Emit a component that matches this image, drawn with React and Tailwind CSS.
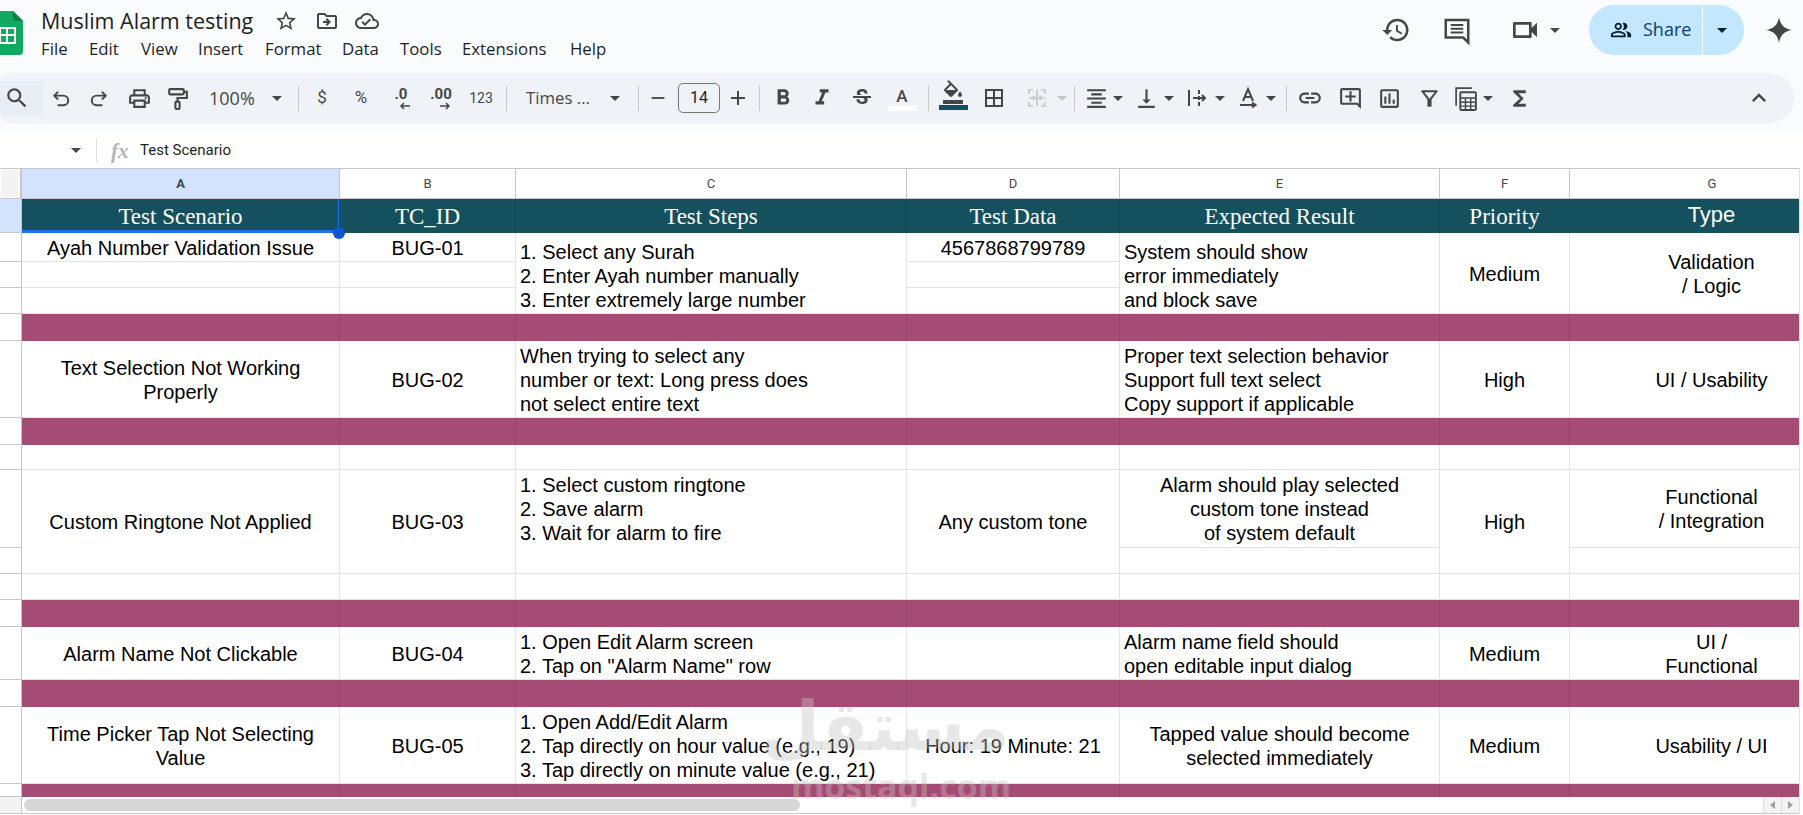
import React from "react";
import {
  MdSearch, MdOutlinePrint, MdFormatBold, MdFormatItalic,
  MdStrikethroughS, MdBorderAll, MdFormatAlignCenter, MdVerticalAlignBottom, MdLink,
  MdOutlineAddComment, MdOutlineInsertChart, MdOutlineFilterAlt, MdFunctions, MdKeyboardArrowUp,
  MdHistory, MdOutlineVideocam, MdOutlinePeopleAlt, MdOutlineFormatColorFill, MdOutlineStarBorder,
  MdOutlineDriveFileMove, MdOutlineCloudDone, MdAdd, MdRemove,
} from "react-icons/md";

const Arrow = ({ className = "" }) => (
  <div className={`flex items-center justify-center h-full shrink-0 ${className}`}>
    <div className="w-0 h-0 border-l-[5px] border-r-[5px] border-t-[5px] border-l-transparent border-r-transparent border-t-current" />
  </div>
);
const Box = ({ className = "", children }) => (
  <div className={`flex items-center justify-center h-full shrink-0 ${className}`}>{children}</div>
);
const Sep = ({ className = "" }) => <div className={`w-px h-[25px] bg-[#c7c7c7] shrink-0 ${className}`} />;

const S = ({ children, className = "w-[24px] h-[24px]" }) => (
  <svg viewBox="0 0 24 24" className={className} fill="none" stroke="currentColor" strokeWidth="2">
    {children}
  </svg>
);

const Logo = () => (
  <svg viewBox="0 0 33 44" className="w-[33px] h-[44px] -ml-[10px] shrink-0">
    <path d="M0 4a4 4 0 0 1 4-4h19l10 10v30a4 4 0 0 1-4 4H4a4 4 0 0 1-4-4z" fill="#11a861" />
    <path d="M23 0l10 10h-7a3 3 0 0 1-3-3z" fill="#0b8043" />
    <path d="M9 16h17v17H9z M11 18v5h5v-5z M18 18v5h6v-5z M11 25v6h5v-6z M18 25v6h6v-6z" fill="#fff" fillRule="evenodd" />
  </svg>
);

const base = "border-r border-b border-[#e2e3e3] flex min-w-0 whitespace-nowrap";
const Mid = ({ className = "", children }) => (
  <div className={`${base} items-center justify-center text-center pt-[1px] ${className}`}>{children}</div>
);
const Low = ({ className = "", children }) => (
  <div className={`${base} items-end justify-start text-left pl-[4px] pb-[1px] ${className}`}>{children}</div>
);
const Top = ({ className = "", children }) => (
  <div className={`${base} items-start justify-start text-left pl-[4px] pt-[3px] ${className}`}>{children}</div>
);
const Gut = ({ className = "" }) => <div className={`border-r border-b border-[#c7c7c7] bg-white ${className}`} />;
const Head = ({ className = "", children }) => (
  <div className={`border-r border-b border-[#c7c7c7] flex items-center justify-center text-[13px] text-[#444746] font-['Roboto',sans-serif] ${className}`}>{children}</div>
);
const Teal = ({ className = "", children }) => (
  <div className={`bg-[#15505e] border-r border-[#134855] text-white flex items-center justify-center ${className}`}>{children}</div>
);
const Purple = () => <div className="bg-[#a54c74] border-r border-[#95446a]" />;
const PurpleRow = () => (
  <>
    <Gut />
    <Purple /><Purple /><Purple /><Purple /><Purple /><Purple /><Purple />
  </>
);
const Empty = ({ className = "" }) => <div className={`${base} ${className}`} />;
const serif = "text-[23px] pt-[2px] font-['Liberation_Serif',serif]";

const Deci = ({ label, dir }) => (
  <div className="flex flex-col items-center">
    <span className="text-[15px] leading-[15px] font-bold">{label}</span>
    <svg viewBox="0 0 12 8" className="w-[12px] h-[8px] ml-[8px]" fill="none" stroke="currentColor" strokeWidth="1.5">
      {dir === "l" ? <path d="M11 4H2M5 1L2 4l3 3" /> : <path d="M1 4h9M7 1l3 3-3 3" />}
    </svg>
  </div>
);

export default function App() {
  return (
    <div className="relative w-[1803px] h-[815px] overflow-hidden bg-white text-black font-['Liberation_Sans',sans-serif] flex flex-col">
      {/* Title + menu */}
      <div className="h-[73px] bg-[#f9fbfd] flex items-start shrink-0 text-[#1f1f1f] font-['Open_Sans',sans-serif]">
        <div className="pt-[11px]"><Logo /></div>
        <div className="ml-[18px] flex flex-col">
          <div className="flex items-center h-[24px] mt-[9px]">
            <span className="text-[21.5px] leading-[24px] w-[212px] whitespace-nowrap">Muslim Alarm testing</span>
            <MdOutlineStarBorder className="w-[24px] h-[24px] ml-[21px] text-[#444746]" />
            <MdOutlineDriveFileMove className="w-[24px] h-[24px] ml-[17px] text-[#444746]" />
            <MdOutlineCloudDone className="w-[24px] h-[24px] ml-[16px] text-[#444746]" />
          </div>
          <div className="flex items-center h-[24px] mt-[4px] text-[16.8px] leading-[24px]">
            <span className="w-[48px]">File</span>
            <span className="w-[52px]">Edit</span>
            <span className="w-[57px]">View</span>
            <span className="w-[67px]">Insert</span>
            <span className="w-[77px]">Format</span>
            <span className="w-[58px]">Data</span>
            <span className="w-[62px]">Tools</span>
            <span className="w-[108px]">Extensions</span>
            <span>Help</span>
          </div>
        </div>
        <div className="ml-auto flex items-center h-[60px] pr-[11px] text-[#444746]">
          <MdHistory className="w-[30px] h-[30px]" />
          <S className="ml-[31px] w-[30px] h-[30px]">
            <path d="M3 4h18v18l-4-4H3z" />
            <path d="M7 8h10M7 11h10M7 14h10" strokeWidth="1.6" />
          </S>
          <MdOutlineVideocam className="ml-[37px] w-[32px] h-[32px]" />
          <Arrow className="ml-[8px] w-[12px]" />
          <div className="ml-[28px] flex h-[50px] text-[#0b3f6e]">
            <div className="w-[113px] bg-[#c2e7ff] rounded-l-[25px] flex items-center pl-[21px]">
              <MdOutlinePeopleAlt className="w-[22px] h-[22px] text-[#001d35]" />
              <span className="ml-[11px] text-[18px] leading-[22px] -mt-[2px]">Share</span>
            </div>
            <div className="ml-px w-[41px] bg-[#c2e7ff] rounded-r-[25px] text-[#001d35]">
              <Arrow className="w-[37px]" />
            </div>
          </div>
          <svg viewBox="0 0 24 24" className="ml-[22px] w-[26px] h-[26px]" fill="currentColor">
            <path d="M12 0C13 7 17 11 24 12 17 13 13 17 12 24 11 17 7 13 0 12 7 11 11 7 12 0z" />
          </svg>
        </div>
      </div>

      {/* Toolbar */}
      <div className="bg-[#f9fbfd] h-[60px] shrink-0 pr-[9px]">
        <div className="h-[50px] bg-[#eff3f8] rounded-r-[25px] rounded-l-[10px] flex items-center text-[#444746] font-['Roboto',sans-serif] text-[16px]">
          <div className="w-[43px] h-[35px] bg-[#e8edf6] flex items-center pl-[4px] shrink-0"><MdSearch className="w-[26px] h-[26px]" /></div>
          <Box className="w-[35px]">
            <S className="w-[23px] h-[23px]"><path d="M6 9h9a4.5 4.5 0 0 1 0 10H9" /><path d="M9.5 5L5.5 9l4 4" /></S>
          </Box>
          <Box className="w-[42px]">
            <S className="w-[23px] h-[23px]"><path d="M18 9H9a4.5 4.5 0 0 0 0 10h6" /><path d="M14.5 5l4 4-4 4" /></S>
          </Box>
          <Box className="w-[38px]"><MdOutlinePrint className="w-[25px] h-[25px]" /></Box>
          <Box className="w-[38px]">
            <S className="w-[25px] h-[25px]">
              <rect x="4" y="3" width="14" height="5" rx="1" />
              <path d="M18 5.5h3V11.5H12V15" />
              <rect x="10" y="15" width="4" height="7" rx="1" />
            </S>
          </Box>
          <span className="ml-[13px] w-[46px] text-[18px] font-['Open_Sans',sans-serif]">100%</span>
          <Arrow className="w-[43px]" />
          <Sep />
          <Box className="w-[46px] text-[17px]">$</Box>
          <Box className="w-[32px] text-[17px]">%</Box>
          <Box className="w-[48px]"><Deci label=".0" dir="l" /></Box>
          <Box className="w-[32px]"><Deci label=".00" dir="r" /></Box>
          <Box className="w-[48px] text-[14px]">123</Box>
          <Sep className="ml-px" />
          <span className="ml-[19px] w-[66px] text-[16.8px] whitespace-nowrap font-['Open_Sans',sans-serif]">Times ...</span>
          <Arrow className="w-[46px]" />
          <Sep />
          <Box className="w-[37px]"><MdRemove className="w-[22px] h-[22px]" /></Box>
          <div className="ml-[2px] w-[42px] h-[30px] border border-[#747775] rounded-[5px] flex items-center justify-center shrink-0 text-[16px] text-[#1f1f1f]">14</div>
          <Box className="w-[36px]"><MdAdd className="w-[24px] h-[24px]" /></Box>
          <Sep className="ml-[3px]" />
          <Box className="w-[46px]"><MdFormatBold className="w-[26px] h-[26px]" /></Box>
          <Box className="w-[32px]"><MdFormatItalic className="w-[26px] h-[26px]" /></Box>
          <Box className="w-[48px]"><MdStrikethroughS className="w-[24px] h-[24px]" /></Box>
          <Box className="w-[32px]">
            <div className="flex flex-col items-center">
              <span className="text-[17px] leading-[20px] font-medium">A</span>
              <div className="w-[29px] h-[5px] bg-white" />
            </div>
          </Box>
          <Sep className="ml-[10px]" />
          <Box className="w-[48px]">
            <div className="flex flex-col items-center">
              <MdOutlineFormatColorFill className="w-[24px] h-[24px] -mt-[6px]" />
              <div className="w-[29px] h-[5px] bg-[#15505e] mt-[1px]" />
            </div>
          </Box>
          <Box className="w-[34px]"><MdBorderAll className="w-[24px] h-[24px]" /></Box>
          <Box className="ml-[7px] w-[38px] text-[#c4c7c5]">
            <S>
              <path d="M4 8V4h4M4 16v4h4M20 8V4h-4M20 16v4h-4M4 12h6M8 10l2 2-2 2M20 12h-6M16 10l-2 2 2 2M12 4v16" strokeWidth="1.7" />
            </S>
          </Box>
          <Arrow className="w-[12px] text-[#c4c7c5]" />
          <Sep className="ml-[6px]" />
          <Box className="ml-[6px] w-[30px]"><MdFormatAlignCenter className="w-[25px] h-[25px]" /></Box>
          <Arrow className="ml-px w-[12px]" />
          <Box className="ml-[7px] w-[30px]"><MdVerticalAlignBottom className="w-[25px] h-[25px]" /></Box>
          <Arrow className="ml-[2px] w-[12px]" />
          <Box className="ml-[7px] w-[30px]">
            <S>
              <path d="M4 4v16M14 4v4M14 10v4M14 16v4" />
              <path d="M8 12h12M17 9l3 3-3 3" />
            </S>
          </Box>
          <Arrow className="ml-[2px] w-[12px]" />
          <Box className="ml-[7px] w-[30px]">
            <S>
              <path d="M7 15L12 3l5 12M8.7 11h6.6" />
              <path d="M4 19h15M16 16.5L19.5 19 16 21.5" />
            </S>
          </Box>
          <Arrow className="ml-[2px] w-[12px]" />
          <Sep className="ml-[9px]" />
          <Box className="w-[46px]"><MdLink className="w-[26px] h-[26px]" /></Box>
          <Box className="w-[34px]"><MdOutlineAddComment className="w-[25px] h-[25px]" /></Box>
          <Box className="w-[44px]"><MdOutlineInsertChart className="w-[25px] h-[25px]" /></Box>
          <Box className="w-[36px]"><MdOutlineFilterAlt className="w-[25px] h-[25px]" /></Box>
          <Box className="w-[36px]">
            <S className="w-[25px] h-[25px]">
              <path d="M3 19V2h15" strokeWidth="1.6" />
              <rect x="7" y="6" width="15" height="17" rx="1" strokeWidth="1.8" />
              <path d="M7 11.5h15M7 15.5h15M7 19.3h15M12 11.5V23M17 11.5V23" strokeWidth="1.4" />
            </S>
          </Box>
          <Arrow className="w-[10px]" />
          <Box className="w-[52px]"><MdFunctions className="w-[25px] h-[25px]" /></Box>
          <div className="ml-auto mr-[19px] w-[32px] flex items-center justify-center"><MdKeyboardArrowUp className="w-[28px] h-[28px]" /></div>
        </div>
      </div>

      {/* Formula bar */}
      <div className="h-[35px] shrink-0 bg-white flex items-center text-[#1f1f1f] font-['Roboto',sans-serif]">
        <div className="w-[96px] flex justify-end pr-[15px] text-[#444746]"><Arrow className="w-[10px]" /></div>
        <Sep className="h-[22px] bg-[#e0e0e0]" />
        <span className="ml-[14px] w-[29px] text-[21px] leading-[24px] font-bold italic text-[#b5b5b5] font-['Liberation_Serif',serif]">fx</span>
        <span className="text-[15px]">Test Scenario</span>
      </div>

      {/* Sheet */}
      <div className="flex w-[1803px]">
        <div className="w-[1799px] overflow-hidden border-t border-[#c7c7c7]">
          <div className="relative grid w-[1854px] grid-cols-[22px_318px_176px_391px_213px_320px_130px_284px] grid-rows-[30px_34px_29px_26px_26px_27px_77px_27px_25px_78px_26px_26px_27px_53px_27px_77px_13px] text-[20px] leading-[24px]">
            {/* column header */}
            <div className="bg-white border-r-[2px] border-b border-[#c7c7c7] p-[1px]"><div className="h-full bg-[#f3f3f3]" /></div>
            <Head className="bg-[#d3e3fd] font-bold text-[#0b2f6b]">A</Head>
            <Head>B</Head><Head>C</Head><Head>D</Head><Head>E</Head><Head>F</Head><Head className="border-r-0">G</Head>

            {/* row 1 */}
            <div className="bg-[#d3e3fd] border-r border-b border-[#c7c7c7]" />
            <Teal className={`relative ${serif}`}>
              Test Scenario
              <div className="absolute left-0 right-0 bottom-0 h-[3px] bg-[#1a73e8]" />
              <div className="absolute right-0 top-0 bottom-0 w-[1px] bg-[#1a73e8]" />
              <div className="absolute -right-[6px] -bottom-[6px] w-[12px] h-[12px] rounded-full bg-[#0b57d0] z-10" />
            </Teal>
            <Teal className={serif}>TC_ID</Teal>
            <Teal className={serif}>Test Steps</Teal>
            <Teal className={serif}>Test Data</Teal>
            <Teal className={serif}>Expected Result</Teal>
            <Teal className={serif}>Priority</Teal>
            <Teal className="text-[22px] pb-[2px]">Type</Teal>

            {/* row 2 */}
            <Gut />
            <Mid>Ayah Number Validation Issue</Mid>
            <Mid>BUG-01</Mid>
            <Low className="row-span-3"><div>1. Select any Surah<br />2. Enter Ayah number manually<br />3. Enter extremely large number</div></Low>
            <Mid>4567868799789</Mid>
            <Low className="row-span-3"><div>System should show<br />error immediately<br />and block save</div></Low>
            <Mid className="row-span-3">Medium</Mid>
            <Mid className="row-span-3"><div>Validation<br />/ Logic</div></Mid>
            {/* row 3 */}
            <Gut /><Empty /><Empty /><Empty />
            {/* row 4 */}
            <Gut /><Empty /><Empty /><Empty />
            <PurpleRow />

            {/* row 6 */}
            <Gut />
            <Mid><div>Text Selection Not Working<br />Properly</div></Mid>
            <Mid>BUG-02</Mid>
            <Low><div>When trying to select any<br />number or text: Long press does<br />not select entire text</div></Low>
            <Empty />
            <Low><div>Proper text selection behavior<br />Support full text select<br />Copy support if applicable</div></Low>
            <Mid>High</Mid>
            <Mid>UI / Usability</Mid>
            <PurpleRow />

            {/* row 8 */}
            <Gut /><Empty /><Empty /><Empty /><Empty /><Empty /><Empty /><Empty />

            {/* row 9-10 */}
            <Gut />
            <Mid className="row-span-2">Custom Ringtone Not Applied</Mid>
            <Mid className="row-span-2">BUG-03</Mid>
            <Top className="row-span-2"><div>1. Select custom ringtone<br />2. Save alarm<br />3. Wait for alarm to fire</div></Top>
            <Mid className="row-span-2">Any custom tone</Mid>
            <Mid><div>Alarm should play selected<br />custom tone instead<br />of system default</div></Mid>
            <Mid className="row-span-2">High</Mid>
            <Mid><div>Functional<br />/ Integration</div></Mid>
            <Gut /><Empty /><Empty />

            {/* row 11 */}
            <Gut /><Empty /><Empty /><Empty /><Empty /><Empty /><Empty /><Empty />
            <PurpleRow />

            {/* row 13 */}
            <Gut />
            <Mid>Alarm Name Not Clickable</Mid>
            <Mid>BUG-04</Mid>
            <Low><div>1. Open Edit Alarm screen<br />2. Tap on "Alarm Name" row</div></Low>
            <Empty />
            <Low><div>Alarm name field should<br />open editable input dialog</div></Low>
            <Mid>Medium</Mid>
            <Mid><div>UI /<br />Functional</div></Mid>
            <PurpleRow />

            {/* row 15 */}
            <Gut />
            <Mid><div>Time Picker Tap Not Selecting<br />Value</div></Mid>
            <Mid>BUG-05</Mid>
            <Low><div>1. Open Add/Edit Alarm<br />2. Tap directly on hour value (e.g., 19)<br />3. Tap directly on minute value (e.g., 21)</div></Low>
            <Mid>Hour: 19 Minute: 21</Mid>
            <Mid><div>Tapped value should become<br />selected immediately</div></Mid>
            <Mid>Medium</Mid>
            <Mid>Usability / UI</Mid>
            <PurpleRow />
          </div>

          {/* horizontal scrollbar */}
          <div className="h-[17px] w-[1799px] flex items-center border-b border-[#c7c7c7] bg-white">
            <div className="w-[22px] h-full bg-[#f3f3f3] border-r border-[#c7c7c7] shrink-0" />
            <div className="ml-[2px] w-[776px] h-[12px] rounded-full bg-[#d6d6d6]" />
            <div className="ml-auto flex h-full text-[#9aa0a6]">
              <div className="w-[18px] bg-[#f3f3f3] border-l border-[#dcdcdc] flex items-center justify-center"><div className="w-0 h-0 border-y-[4px] border-y-transparent border-r-[5px] border-r-current" /></div>
              <div className="w-[18px] bg-[#f3f3f3] border-l border-[#dcdcdc] flex items-center justify-center"><div className="w-0 h-0 border-y-[4px] border-y-transparent border-l-[5px] border-l-current" /></div>
            </div>
          </div>
        </div>
        <div className="w-[4px] border-l border-[#e0e0e0] bg-white" />
      </div>

      {/* Watermark */}
      <div className="absolute left-[790px] top-[684px] w-[222px] flex flex-col items-center pointer-events-none text-[rgba(195,195,195,0.4)] font-bold">
        <span className="text-[68px] leading-[86px] pr-[32px] font-['DejaVu_Sans',sans-serif]" dir="rtl">مستقل</span>
        <span className="text-[34px] leading-[36px] -mt-[2px] font-['Open_Sans',sans-serif]">mostaql.com</span>
      </div>
    </div>
  );
}
